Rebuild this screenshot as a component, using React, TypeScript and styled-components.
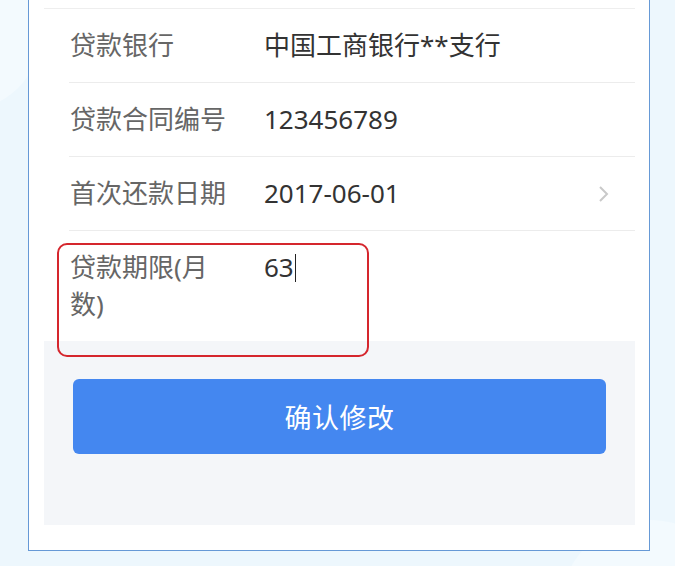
import React from 'react';
import styled, { createGlobalStyle } from 'styled-components';

const GlobalStyle = createGlobalStyle`
  html, body {
    margin: 0;
    padding: 0;
    background: #edf7fd;
    font-family: "Noto Sans", "Noto Sans CJK SC", sans-serif;
    overflow: hidden;
  }
`;

const Page = styled.div`
  position: relative;
  width: 675px;
  height: 566px;
  overflow: hidden;
`;

const Blob = styled.div<{ $x: number; $y: number; $size: number }>`
  position: absolute;
  left: ${p => p.$x}px;
  top: ${p => p.$y}px;
  width: ${p => p.$size}px;
  height: ${p => p.$size}px;
  border-radius: 50%;
  background: #f3fafe;
`;

const Frame = styled.div`
  position: relative;
  box-sizing: border-box;
  margin-left: 28px;
  width: 622px;
  height: 551px;
  background: #fff;
  border: 1px solid #6699d6;
  border-top: none;
  padding: 0 14px 25px 15px;
  display: flex;
  flex-direction: column;
`;

const TopEdge = styled.div`
  height: 8px;
  border-bottom: 1px solid #eeeeee;
`;

const List = styled.div`
  position: relative;
  padding-left: 25px;
  background: #fff;
`;

const Row = styled.div<{ $last?: boolean }>`
  display: flex;
  align-items: flex-start;
  padding: 18px 0 18px 1px;
  line-height: 37px;
  border-bottom: ${p => (p.$last ? 'none' : '1px solid #ececec')};
`;

const Label = styled.div`
  width: 164px;
  flex-shrink: 0;
  margin-right: 30px;
  font-size: 26px;
  color: #666;
`;

const Value = styled.div`
  flex: 1;
  font-size: 26px;
  color: #333;
  display: flex;
  align-items: center;
`;

const Caret = styled.span`
  display: inline-block;
  width: 1.5px;
  height: 28px;
  margin-left: 1px;
  background: #222;
`;

const Chevron = styled.svg`
  width: 14px;
  height: 20px;
  margin-right: 24px;
  align-self: center;
`;

const Highlight = styled.div`
  position: absolute;
  left: 13px;
  top: 234px;
  width: 312px;
  height: 114px;
  box-sizing: border-box;
  border: 2px solid #d5262d;
  border-radius: 10px;
  pointer-events: none;
`;

const Footer = styled.div`
  flex: 1;
  background: #f4f6f9;
  padding: 38px 29px 0 29px;
`;

const SubmitButton = styled.button`
  width: 100%;
  height: 75px;
  border: none;
  border-radius: 6px;
  background: #4487f0;
  color: #fff;
  font-family: "Noto Sans CJK SC", sans-serif;
  font-size: 27px;
  letter-spacing: 0.5px;
  cursor: pointer;
`;

const rows = [
  { label: '贷款银行', value: '中国工商银行**支行' },
  { label: '贷款合同编号', value: '123456789' },
  { label: '首次还款日期', value: '2017-06-01', arrow: true },
];

const App: React.FC = () => {
  return (
    <Page>
      <GlobalStyle />
      <Blob $x={-110} $y={-40} $size={150} />
      <Blob $x={560} $y={520} $size={180} />
      <Frame>
        <TopEdge />
        <List>
          {rows.map(r => (
            <Row key={r.label}>
              <Label>{r.label}</Label>
              <Value>{r.value}</Value>
              {r.arrow && (
                <Chevron viewBox="0 0 14 20">
                  <path d="M3 3 L10 10 L3 17" fill="none" stroke="#c9c9c9" strokeWidth="2" />
                </Chevron>
              )}
            </Row>
          ))}
          <Row $last>
            <Label>贷款期限(月数)</Label>
            <Value>
              63
              <Caret />
            </Value>
          </Row>
          <Highlight />
        </List>
        <Footer>
          <SubmitButton>确认修改</SubmitButton>
        </Footer>
      </Frame>
    </Page>
  );
};

export default App;
